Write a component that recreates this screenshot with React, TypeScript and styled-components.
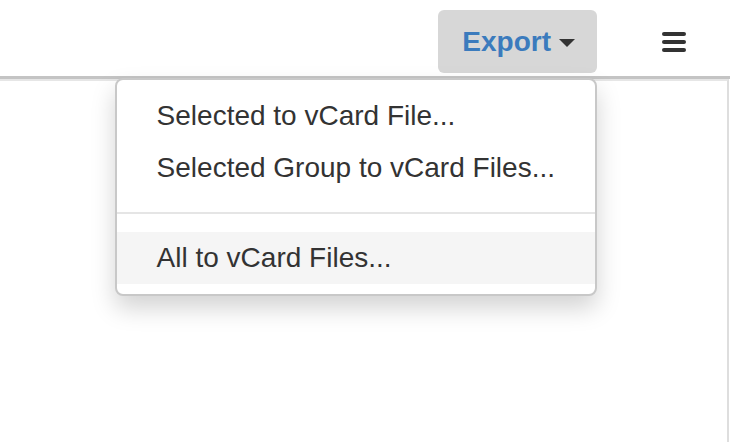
import * as React from "react";
import styled, {createGlobalStyle} from "styled-components";

const GlobalStyle = createGlobalStyle`
    html, body {
        margin: 0;
        padding: 0;
        background: #ffffff;
        font-family: "Liberation Sans", Arial, Helvetica, sans-serif;
    }
    * {
        box-sizing: border-box;
    }
`

const menuItems = [
    {label: "Selected to vCard File...", active: false},
    {label: "Selected Group to vCard Files...", active: false},
    {divider: true},
    {label: "All to vCard Files...", active: true},
];

export default class App extends React.Component<{}, any> {
    render() {
        return <Page>
            <GlobalStyle/>
            <Toolbar>
                <ExportWrap>
                    <ExportButton>
                        Export<Caret/>
                    </ExportButton>
                    <Menu>
                        {menuItems.map((item, i) => item.divider
                            ? <Divider key={i}/>
                            : <MenuItem key={i} active={item.active || false}>{item.label}</MenuItem>
                        )}
                    </Menu>
                </ExportWrap>
                <MenuToggle>
                    <Bar/>
                    <Bar/>
                    <Bar/>
                </MenuToggle>
            </Toolbar>
            <Content/>
        </Page>
    }
}

const Page = styled.div`
    width: 730px;
    height: 442px;
    display: flex;
    flex-direction: column;
    overflow: hidden;
`

const Toolbar = styled.div`
    height: 79px;
    display: flex;
    align-items: flex-start;
    justify-content: flex-end;
    padding: 10px 44px 0 0;
    border-bottom: 3px solid #c4c4c4;
    flex-shrink: 0;
`

const ExportWrap = styled.div`
    position: relative;
    margin-right: 65px;
`

const ExportButton = styled.div`
    height: 63px;
    padding: 0 22px 0 24px;
    display: flex;
    align-items: center;
    background-color: #d7d7d7;
    border-radius: 6px;
    color: #3b7bbd;
    font-size: 28px;
    font-weight: 700;
    cursor: pointer;
`

const Caret = styled.span`
    display: inline-block;
    width: 0;
    height: 0;
    margin-left: 8px;
    margin-top: 2px;
    border-top: 8px solid #333333;
    border-left: 8px solid transparent;
    border-right: 8px solid transparent;
`

const Menu = styled.div`
    position: absolute;
    top: calc(100% + 5px);
    right: 0;
    z-index: 10;
    padding: 10px 0;
    background-color: #ffffff;
    border: 2px solid #c8c8c8;
    border-radius: 8px;
    box-shadow: 0 12px 24px rgba(0, 0, 0, 0.175);
    white-space: nowrap;
`

const MenuItem = styled.div<{active: boolean}>`
    padding: 6px 40px;
    line-height: 40px;
    font-size: 28px;
    color: #333333;
    background-color: ${props => props.active ? "#f5f5f5" : "transparent"};
`

const Divider = styled.div`
    height: 2px;
    margin: 18px 0;
    background-color: #e5e5e5;
`

const MenuToggle = styled.div`
    width: 24px;
    margin-top: 22px;
    display: flex;
    flex-direction: column;
    gap: 4px;
`

const Bar = styled.span`
    display: block;
    height: 4px;
    border-radius: 2px;
    background-color: #333333;
`

const Content = styled.div`
    flex: 1;
    border-top: 2px solid #e6e6e6;
    border-right: 2px solid #dedede;
    margin-right: 1px;
`
